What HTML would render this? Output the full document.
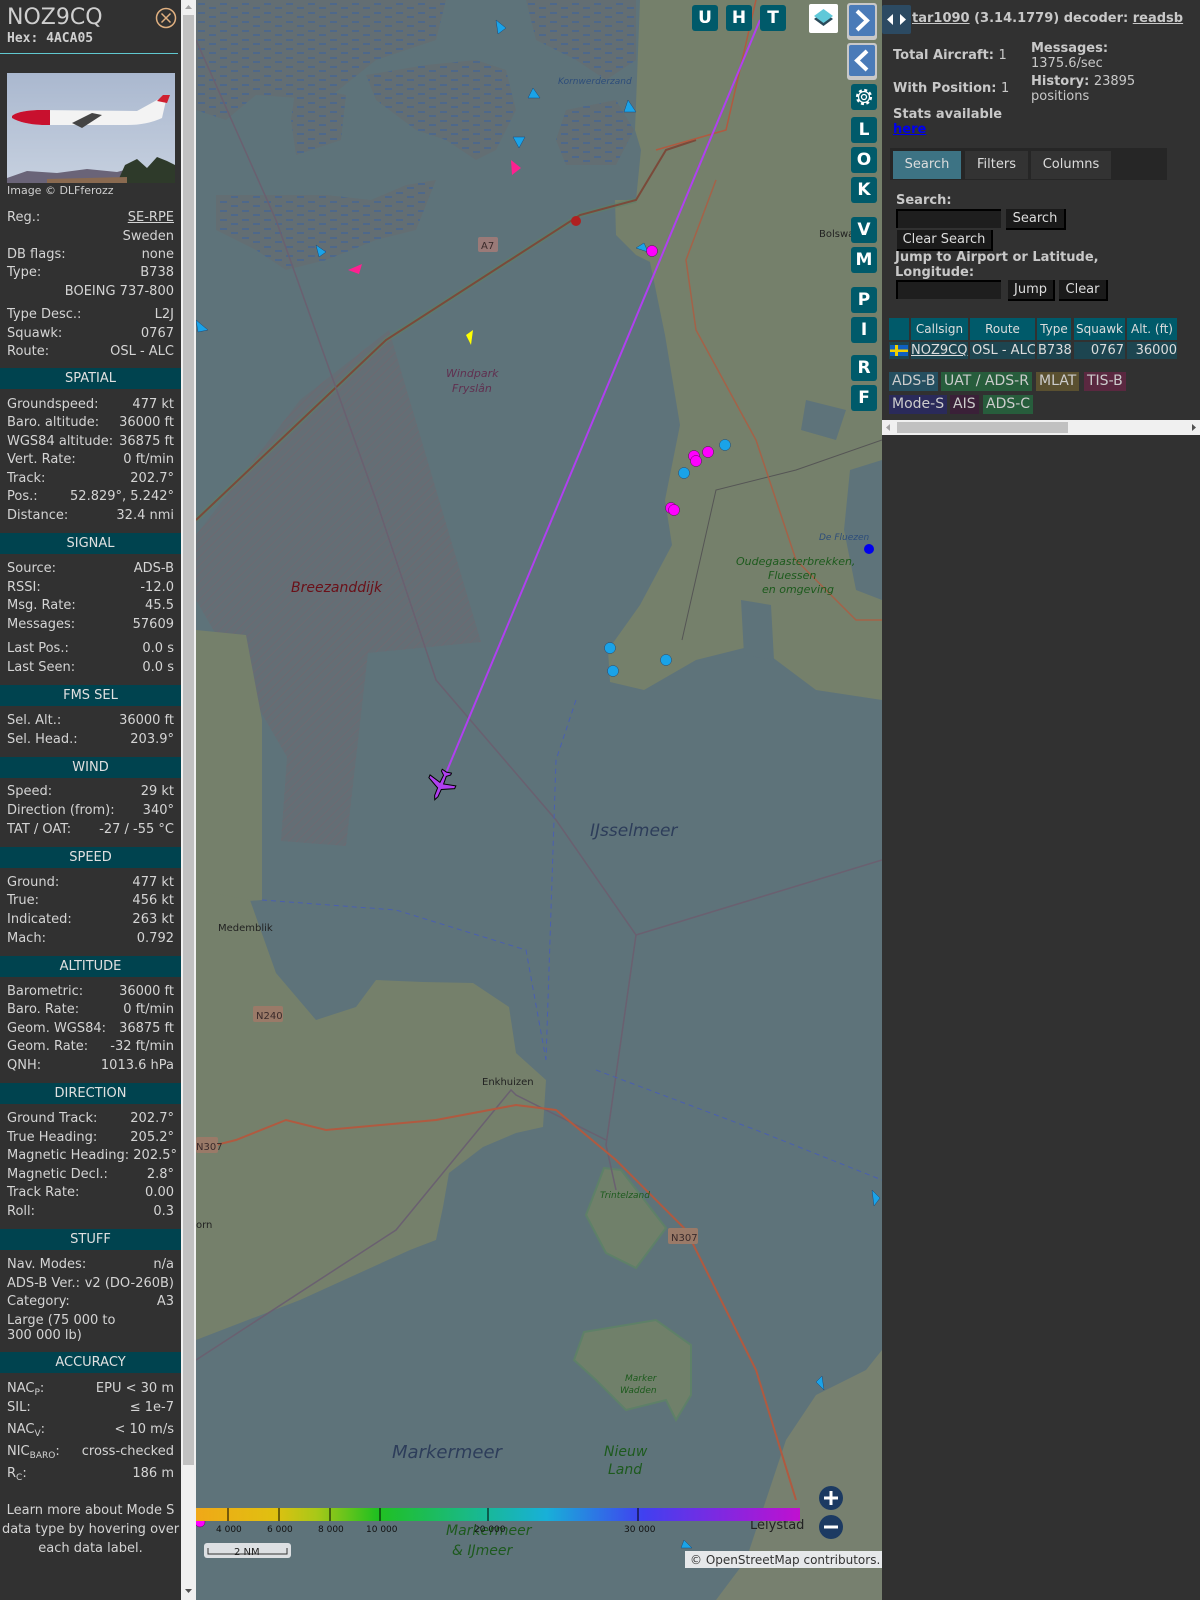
<!DOCTYPE html>
<html><head><meta charset="utf-8">
<style>
*{margin:0;padding:0;box-sizing:border-box}
body{width:1200px;height:1600px;overflow:hidden;background:#313131;font-family:"DejaVu Sans","Liberation Sans",sans-serif;font-size:13px;color:#d4d4d4;position:relative}
#left{position:absolute;left:0;top:0;width:181px;height:1600px;background:#313131}
.r{position:absolute;left:7px;width:167px;height:18px;line-height:18px;display:flex;justify-content:space-between;white-space:nowrap}
.h{position:absolute;left:0;width:181px;height:21px;line-height:21px;background:#00434f;text-align:center;color:#e0e0e0}
sub{font-size:9px;vertical-align:-3px}
#sb{position:absolute;left:181px;top:0;width:15px;height:1600px;background:#f0f0f0}
#map{position:absolute;left:196px;top:0;width:686px;height:1600px;overflow:hidden;background:#5e737a}
.mb{position:absolute;width:26px;height:26px;background:#005a6a;color:#fff;font-weight:bold;font-size:17px;text-align:center;line-height:26px;border-radius:3px}
#right{position:absolute;left:882px;top:0;width:318px;height:1600px;background:#313131;font-weight:bold;color:#c8c8c8}
.btn{position:absolute;background:#1a1a1a;color:#ddd;font-weight:normal;font-size:13px;text-align:center;line-height:19px;border-right:2px solid #000;border-bottom:2px solid #000}
.inp{position:absolute;background:#1e1e1e;border-top:2px solid #000;border-left:2px solid #000}
.th{position:absolute;top:318px;height:22px;line-height:22px;background:#005a6a;color:#ddd;font-weight:normal;font-size:12px;text-align:center;white-space:nowrap}
.td{position:absolute;top:342px;height:17px;line-height:17px;background:#1d4550;color:#ddd;font-weight:normal;font-size:13px;white-space:nowrap;overflow:hidden}
.lg{position:absolute;height:19px;line-height:19px;font-weight:normal;font-size:14px;padding:0 3px;white-space:nowrap}
</style></head><body>

<div id="left">
<div style="position:absolute;left:7px;top:4px;font-size:22px;color:#cfcfcf;line-height:28px">NOZ9CQ</div>
<div style="position:absolute;left:7px;top:31px;font-family:'DejaVu Sans Mono',monospace;font-weight:bold;font-size:13px;color:#cfcfcf">Hex: 4ACA05</div>
<svg style="position:absolute;left:155px;top:7px" width="22" height="22"><circle cx="11" cy="11" r="9.5" fill="none" stroke="#e0b080" stroke-width="1.5"/><path d="M6.5 6.5L15.5 15.5M15.5 6.5L6.5 15.5" stroke="#e0b080" stroke-width="1.5"/></svg>
<div style="position:absolute;left:0;top:53px;width:178px;height:1px;background:#60c8d0"></div>
<svg style="position:absolute;left:7px;top:73px" width="168" height="110">
<defs><linearGradient id="sky" x1="0" y1="0" x2="0" y2="1"><stop offset="0" stop-color="#aab8cf"/><stop offset="1" stop-color="#c6d0df"/></linearGradient></defs>
<rect width="168" height="110" fill="url(#sky)"/>
<path d="M0 105 L20 98 L50 100 L80 96 L110 99 L125 95 L168 100 L168 110 L0 110Z" fill="#6a6478"/>
<path d="M110 110 L118 92 L130 86 L140 95 L150 84 L160 88 L168 92 L168 110Z" fill="#2e3a2a"/>
<path d="M40 106 L120 104 L120 110 L40 110Z" fill="#8a6a50"/>
<path d="M5 43 Q10 38 30 37 L130 38 L150 27 L160 23 L155 45 Q140 52 120 52 L35 52 Q15 51 5 45Z" fill="#f3f3f3"/>
<path d="M5 43 Q10 38 30 37 L43 37 L43 52 L35 52 Q15 51 5 45Z" fill="#c8102e"/>
<path d="M150 28 L156 22 L163 22 L160 30Z" fill="#d02030"/>
<path d="M65 50 L85 40 L95 42 L75 55Z" fill="#444"/>
</svg>
<div style="position:absolute;left:7px;top:184px;font-size:11px;color:#cfcfcf">Image © DLFferozz</div>

<div class="r" style="top:209px"><span>Reg.:</span><span style="text-decoration:underline">SE-RPE</span></div>
<div class="r" style="top:228px"><span></span><span>Sweden</span></div>
<div class="r" style="top:246px"><span>DB flags:</span><span>none</span></div>
<div class="r" style="top:264px"><span>Type:</span><span>B738</span></div>
<div class="r" style="top:283px"><span></span><span>BOEING 737-800</span></div>
<div class="r" style="top:306px"><span>Type Desc.:</span><span>L2J</span></div>
<div class="r" style="top:325px"><span>Squawk:</span><span>0767</span></div>
<div class="r" style="top:343px"><span>Route:</span><span>OSL - ALC</span></div>

<div class="h" style="top:368px">SPATIAL</div>
<div class="r" style="top:396px"><span>Groundspeed:</span><span>477 kt</span></div>
<div class="r" style="top:414px"><span>Baro. altitude:</span><span>36000 ft</span></div>
<div class="r" style="top:433px"><span>WGS84 altitude:</span><span>36875 ft</span></div>
<div class="r" style="top:451px"><span>Vert. Rate:</span><span>0 ft/min</span></div>
<div class="r" style="top:470px"><span>Track:</span><span>202.7°</span></div>
<div class="r" style="top:488px"><span>Pos.:</span><span>52.829°, 5.242°</span></div>
<div class="r" style="top:507px"><span>Distance:</span><span>32.4 nmi</span></div>

<div class="h" style="top:533px">SIGNAL</div>
<div class="r" style="top:560px"><span>Source:</span><span>ADS-B</span></div>
<div class="r" style="top:579px"><span>RSSI:</span><span>-12.0</span></div>
<div class="r" style="top:597px"><span>Msg. Rate:</span><span>45.5</span></div>
<div class="r" style="top:616px"><span>Messages:</span><span>57609</span></div>
<div class="r" style="top:640px"><span>Last Pos.:</span><span>0.0 s</span></div>
<div class="r" style="top:659px"><span>Last Seen:</span><span>0.0 s</span></div>

<div class="h" style="top:685px">FMS SEL</div>
<div class="r" style="top:712px"><span>Sel. Alt.:</span><span>36000 ft</span></div>
<div class="r" style="top:731px"><span>Sel. Head.:</span><span>203.9°</span></div>

<div class="h" style="top:757px">WIND</div>
<div class="r" style="top:783px"><span>Speed:</span><span>29 kt</span></div>
<div class="r" style="top:802px"><span>Direction (from):</span><span>340°</span></div>
<div class="r" style="top:821px"><span>TAT / OAT:</span><span>-27 / -55 °C</span></div>

<div class="h" style="top:847px">SPEED</div>
<div class="r" style="top:874px"><span>Ground:</span><span>477 kt</span></div>
<div class="r" style="top:892px"><span>True:</span><span>456 kt</span></div>
<div class="r" style="top:911px"><span>Indicated:</span><span>263 kt</span></div>
<div class="r" style="top:930px"><span>Mach:</span><span>0.792</span></div>

<div class="h" style="top:956px">ALTITUDE</div>
<div class="r" style="top:983px"><span>Barometric:</span><span>36000 ft</span></div>
<div class="r" style="top:1001px"><span>Baro. Rate:</span><span>0 ft/min</span></div>
<div class="r" style="top:1020px"><span>Geom. WGS84:</span><span>36875 ft</span></div>
<div class="r" style="top:1038px"><span>Geom. Rate:</span><span>-32 ft/min</span></div>
<div class="r" style="top:1057px"><span>QNH:</span><span>1013.6 hPa</span></div>

<div class="h" style="top:1083px">DIRECTION</div>
<div class="r" style="top:1110px"><span>Ground Track:</span><span>202.7°</span></div>
<div class="r" style="top:1129px"><span>True Heading:</span><span>205.2°</span></div>
<div class="r" style="top:1147px"><span>Magnetic Heading:</span><span>&nbsp;202.5°</span></div>
<div class="r" style="top:1166px"><span>Magnetic Decl.:</span><span>2.8°</span></div>
<div class="r" style="top:1184px"><span>Track Rate:</span><span>0.00</span></div>
<div class="r" style="top:1203px"><span>Roll:</span><span>0.3</span></div>

<div class="h" style="top:1229px">STUFF</div>
<div class="r" style="top:1256px"><span>Nav. Modes:</span><span>n/a</span></div>
<div class="r" style="top:1275px"><span>ADS-B Ver.:</span><span>&nbsp;v2 (DO-260B)</span></div>
<div class="r" style="top:1293px"><span>Category:</span><span>A3</span></div>
<div style="position:absolute;left:7px;top:1313px;line-height:15px">Large (75 000 to<br>300 000 lb)</div>

<div class="h" style="top:1352px">ACCURACY</div>
<div class="r" style="top:1380px"><span>NAC<sub>P</sub>:</span><span>EPU &lt; 30 m</span></div>
<div class="r" style="top:1399px"><span>SIL:</span><span>≤ 1e-7</span></div>
<div class="r" style="top:1421px"><span>NAC<sub>V</sub>:</span><span>&lt; 10 m/s</span></div>
<div class="r" style="top:1443px"><span>NIC<sub>BARO</sub>:</span><span>cross-checked</span></div>
<div class="r" style="top:1465px"><span>R<sub>C</sub>:</span><span>186 m</span></div>
<div style="position:absolute;left:0;top:1501px;width:181px;text-align:center;line-height:19px">Learn more about Mode S data type by hovering over each data label.</div>
</div>

<div id="sb">
<div style="position:absolute;left:2px;top:15px;width:11px;height:1450px;background:#c1c1c1"></div>
<svg style="position:absolute;left:3px;top:4px" width="9" height="6"><path d="M1 5L4.5 1L8 5Z" fill="#a3a3a3"/></svg>
<svg style="position:absolute;left:3px;top:1588px" width="9" height="6"><path d="M1 1L4.5 5L8 1Z" fill="#505050"/></svg>
</div>

<div id="map">
<svg width="686" height="1600" style="position:absolute;left:0;top:0">
<defs>
<pattern id="mud" width="22" height="9" patternUnits="userSpaceOnUse"><rect width="22" height="9" fill="#636e73"/><path d="M2 4h7M13 8h7" stroke="#3a62a0" stroke-width="1"/></pattern>
<pattern id="hatch" width="6" height="6" patternUnits="userSpaceOnUse" patternTransform="rotate(45)"><rect width="6" height="6" fill="#646e75"/><path d="M0 0v6" stroke="#74666e" stroke-width="1"/></pattern>
</defs>
<!-- mudflats -->
<path d="M0 0 L250 0 L240 40 L180 60 L130 100 L60 95 L30 120 L0 110Z" fill="url(#mud)"/>
<path d="M170 75 L230 65 L280 60 L310 70 L320 110 L300 150 L280 160 L250 140 L220 130 L180 100Z" fill="url(#mud)"/>
<path d="M100 85 L150 95 L145 140 L100 155 L95 120Z" fill="url(#mud)"/>
<path d="M330 0 L440 0 L440 60 L410 80 L380 60 L340 40Z" fill="url(#mud)"/>
<path d="M370 110 L420 100 L438 130 L420 165 L370 165 L360 140Z" fill="url(#mud)"/>
<path d="M20 195 L130 195 L175 200 L210 185 L240 180 L220 230 L180 240 L130 260 L90 270 L60 250 L20 230Z" fill="url(#mud)"/>
<!-- windpark -->
<path d="M0 535 L104 400 L193 330 L285 642 L172 653 L150 846 L85 841 L91 757 L0 600Z" fill="url(#hatch)"/>
<!-- Friesland land -->
<path d="M444 0 L686 0 L686 700 L620 690 L560 645 L500 660 L448 690 L414 682 L412 650 L444 605 L476 545 L469 500 L484 425 L469 335 L454 262 L440 255 L420 235 L419 200 L440 200 L445 150 L439 130Z" fill="#75806b"/>
<path d="M654 470 L686 460 L686 600 L660 590 L648 530Z" fill="#5e737a"/>
<path d="M545 600 L575 605 L578 660 L548 655Z" fill="#5e737a"/>
<path d="M610 400 L650 410 L640 440 L605 430Z" fill="#5e737a"/>
<!-- left strip NH -->
<path d="M0 630 L50 635 L66 720 L66 900 L0 905Z" fill="#75806b"/>
<!-- West-Friesland -->
<path d="M0 890 L54 900 L80 973 L120 1020 L160 1007 L180 980 L227 982 L277 983 L313 1007 L320 1053 L350 1080 L347 1127 L320 1133 L287 1147 L253 1173 L247 1207 L240 1240 L214 1250 L104 1300 L0 1340Z" fill="#75806b"/>
<!-- islands -->
<path d="M408 1168 L425 1170 L470 1228 L440 1268 L410 1253 L390 1215Z" fill="#70806a" stroke="#5e8068" stroke-width="2"/>
<path d="M388 1332 L460 1320 L495 1345 L495 1395 L480 1420 L470 1400 L430 1410 L400 1380 L378 1360Z" fill="#70806a" stroke="#5e8068" stroke-width="2"/>
<!-- Flevoland -->
<path d="M686 1350 L670 1370 L620 1395 L590 1440 L570 1500 L550 1560 L520 1600 L686 1600Z" fill="#77806f"/>
<!-- roads/borders -->
<path d="M0 520 L190 340 L384 215 L440 200" stroke="#5e8068" stroke-width="5" fill="none" opacity="0.6"/>
<path d="M0 520 L190 340 L384 215 L440 200 L470 150 L500 140" stroke="#7a4a3a" stroke-width="2" fill="none"/>
<path d="M0 40 L80 220 L180 500 L240 680 L360 820 L440 935 L686 860" stroke="#6a6070" stroke-width="1.5" fill="none"/>
<path d="M0 1360 L200 1230 L315 1090 L320 1095 L410 1140" stroke="#6a6070" stroke-width="1.5" fill="none"/>
<path d="M440 935 L410 1145 L420 1190" stroke="#6a6070" stroke-width="1.5" fill="none"/>
<path d="M0 1150 L40 1140 L90 1120 L130 1130 L240 1120 L320 1105 L360 1110 L420 1160 L490 1230 L560 1370 L600 1500" stroke="#b05a40" stroke-width="2" fill="none"/>
<path d="M66 900 L200 910 L330 950 L350 1060" stroke="#4a5fb0" stroke-width="1" stroke-dasharray="5,4" fill="none"/>
<path d="M400 1070 L560 1130 L686 1180" stroke="#4a5fb0" stroke-width="1" stroke-dasharray="5,4" fill="none"/>
<path d="M380 700 L360 760 L350 1060" stroke="#4a5fb0" stroke-width="1" stroke-dasharray="5,4" fill="none"/>
<path d="M686 440 L600 470 L520 490 L486 640" stroke="#555" stroke-width="1" fill="none"/>
<path d="M560 0 L530 130 L460 150" stroke="#b05a40" stroke-width="1.5" fill="none"/>
<path d="M520 180 L490 260 L500 330 L560 440 L600 560 L660 620 L686 620" stroke="#b05a40" stroke-width="1.5" fill="none" opacity="0.8"/>
<!-- track -->
<path d="M564 20 L245 785" stroke="#b040f0" stroke-width="2" fill="none"/>
<!-- labels -->
<g font-family="DejaVu Sans,sans-serif" font-style="italic">
<text x="95" y="592" fill="#6a1018" font-size="14">Breezanddijk</text>
<text x="394" y="836" fill="#2d3d5a" font-size="17">IJsselmeer</text>
<text x="196" y="1458" fill="#2d3d5a" font-size="18">Markermeer</text>
<text x="408" y="1456" fill="#1d5a1d" font-size="14">Nieuw</text>
<text x="412" y="1474" fill="#1d5a1d" font-size="14">Land</text>
<text x="250" y="1535" fill="#1d5a1d" font-size="14">Markermeer</text>
<text x="256" y="1555" fill="#1d5a1d" font-size="14">&amp; IJmeer</text>
<text x="250" y="377" fill="#603050" font-size="11">Windpark</text>
<text x="256" y="392" fill="#603050" font-size="11">Fryslân</text>
<text x="540" y="565" fill="#1d5a1d" font-size="11">Oudegaasterbrekken,</text>
<text x="572" y="579" fill="#1d5a1d" font-size="11">Fluessen</text>
<text x="566" y="593" fill="#1d5a1d" font-size="11">en omgeving</text>
<text x="362" y="84" fill="#2d4d7a" font-size="9">Kornwerderzand</text>
<text x="623" y="540" fill="#2d4d7a" font-size="9">De Fluezen</text>
<text x="404" y="1198" fill="#1d5a1d" font-size="9">Trintelzand</text>
<text x="429" y="1381" fill="#1d5a1d" font-size="9">Marker</text>
<text x="424" y="1393" fill="#1d5a1d" font-size="9">Wadden</text>
</g>
<g font-family="DejaVu Sans,sans-serif" font-size="10" fill="#222">
<text x="22" y="931">Medemblik</text>
<text x="286" y="1085">Enkhuizen</text>
<text x="0" y="1228">orn</text>
<text x="554" y="1529" font-size="13">Lelystad</text>
<text x="623" y="237">Bolswa</text>
</g>
<g font-size="10" fill="#3a2a2a" font-family="DejaVu Sans,sans-serif">
<rect x="282" y="237" width="20" height="15" rx="2" fill="#9a7a78"/><text x="285" y="249">A7</text>
<rect x="57" y="1006" width="30" height="16" rx="2" fill="#9a7a68"/><text x="60" y="1019">N240</text>
<rect x="0" y="1137" width="22" height="16" rx="2" fill="#9a7a68"/><text x="0" y="1150">N307</text>
<rect x="472" y="1228" width="30" height="16" rx="2" fill="#9a7a68"/><text x="475" y="1241">N307</text>
</g>
<!-- markers -->
<g fill="#1aa3e8" stroke="#1a4a7a" stroke-width="0.5">
<path d="M300 20 L310 28 L302 34Z"/><path d="M337 88 L344 98 L332 98Z"/><path d="M432 100 L440 112 L428 112Z"/>
<path d="M317 137 L329 137 L323 148Z"/><path d="M120 245 L130 252 L123 257Z"/><path d="M0 320 L12 330 L2 332Z"/>
<path d="M448 243 L440 248 L452 252Z"/><path d="M620 1382 L628 1390 L626 1376Z"/><path d="M676 1190 L684 1198 L678 1206Z"/><path d="M485 1548 L496 1548 L488 1540Z"/>
</g>
<path d="M315 160 L325 168 L316 175Z" fill="#ff2090"/><path d="M152 270 L166 264 L163 274Z" fill="#ff2090"/>
<path d="M270 335 L277 330 L275 345Z" fill="#ffff00"/>
<circle cx="380" cy="221" r="5" fill="#b02020"/>
<g fill="#ff00ff" stroke="#5a005a" stroke-width="0.5"><circle cx="456" cy="251" r="5.5"/><circle cx="498" cy="456" r="5.5"/><circle cx="500" cy="461" r="5.5"/><circle cx="512" cy="452" r="5.5"/><circle cx="475" cy="508" r="5.5"/><circle cx="478" cy="510" r="5.5"/><circle cx="4" cy="1522" r="5"/></g>
<g fill="#1aa3e8" stroke="#1a4a7a" stroke-width="0.5"><circle cx="529" cy="445" r="5.5"/><circle cx="488" cy="473" r="5.5"/><circle cx="414" cy="648" r="5.5"/><circle cx="470" cy="660" r="5.5"/><circle cx="417" cy="671" r="5.5"/></g>
<circle cx="673" cy="549" r="5" fill="#0000ee"/>
<!-- aircraft -->
<g transform="translate(245,785) rotate(203)">
<path d="M0 -16 L1.8 -12 L2 -4 L14 2 L14 5 L2 2 L1.5 10 L5 13 L5 15 L0 14 L-5 15 L-5 13 L-1.5 10 L-2 2 L-14 5 L-14 2 L-2 -4 L-1.8 -12Z" fill="#b040f0" stroke="#000" stroke-width="1"/>
</g>
<!-- color bar -->
<defs><linearGradient id="cb" x1="0" x2="1"><stop offset="0" stop-color="#f0a818"/><stop offset="0.13" stop-color="#e0c010"/><stop offset="0.2" stop-color="#a8c818"/><stop offset="0.3" stop-color="#20c020"/><stop offset="0.48" stop-color="#18b898"/><stop offset="0.58" stop-color="#18b0d8"/><stop offset="0.74" stop-color="#4040f0"/><stop offset="1" stop-color="#c010d0"/></linearGradient></defs>
<rect x="0" y="1508" width="604" height="13" fill="url(#cb)"/>
<g stroke="#000" stroke-width="1"><path d="M32 1508v13M83 1508v13M134 1508v13M184 1508v13M292 1508v13M442 1508v13"/></g>
<g font-size="9" fill="#111" font-family="DejaVu Sans,sans-serif"><text x="20" y="1532">4 000</text><text x="71" y="1532">6 000</text><text x="122" y="1532">8 000</text><text x="170" y="1532">10 000</text><text x="278" y="1532">20 000</text><text x="428" y="1532">30 000</text></g>
<circle cx="635" cy="1498" r="12" fill="#1c3a62"/><path d="M628 1498h14M635 1491v14" stroke="#fff" stroke-width="3"/>
<circle cx="635" cy="1527" r="12" fill="#1c3a62"/><path d="M628 1527h14" stroke="#fff" stroke-width="3"/>
<rect x="8" y="1543" width="87" height="15" rx="3" fill="#dde0e3"/>
<path d="M12 1548v6h79v-6" stroke="#333" fill="none"/>
<text x="38" y="1555" font-size="10" fill="#222" font-family="DejaVu Sans,sans-serif">2 NM</text>
<rect x="489" y="1551" width="197" height="17" fill="#e6e8ea"/>
<text x="494" y="1564" font-size="12" fill="#333" font-family="DejaVu Sans,sans-serif">© OpenStreetMap contributors.</text>
</svg>
<div class="mb" style="left:496px;top:5px">U</div>
<div class="mb" style="left:530px;top:5px">H</div>
<div class="mb" style="left:564px;top:5px">T</div>
<div style="position:absolute;left:613px;top:4px;width:29px;height:29px;background:#fff;border-radius:2px"><svg width="29" height="29"><path d="M14.5 8L24 15L14.5 22L5 15Z" fill="#2a4a5a"/><path d="M14.5 5L24 12L14.5 19L5 12Z" fill="#60c8d8"/></svg></div>
<div style="position:absolute;left:651px;top:3px;width:30px;height:37px;background:#c8c8c8;border-radius:3px;padding:2px"><div style="width:26px;height:31px;background:#4a7bb8;border-radius:2px"><svg width="26" height="31"><path d="M8 6L18 15.5L8 25" stroke="#fff" stroke-width="4" fill="none"/></svg></div></div>
<div style="position:absolute;left:651px;top:43px;width:30px;height:37px;background:#c8c8c8;border-radius:3px;padding:2px"><div style="width:26px;height:31px;background:#4a7bb8;border-radius:2px"><svg width="26" height="31"><path d="M18 6L8 15.5L18 25" stroke="#fff" stroke-width="4" fill="none"/></svg></div></div>
<div class="mb" style="left:655px;top:84px"><svg width="26" height="26"><circle cx="13" cy="13" r="7" fill="none" stroke="#fff" stroke-width="2.2" stroke-dasharray="3,2.5"/><circle cx="13" cy="13" r="5.5" fill="none" stroke="#fff" stroke-width="1.2"/><circle cx="13" cy="13" r="2.5" fill="none" stroke="#fff" stroke-width="1.3"/></svg></div>
<div class="mb" style="left:655px;top:117px">L</div>
<div class="mb" style="left:655px;top:147px">O</div>
<div class="mb" style="left:655px;top:177px">K</div>
<div class="mb" style="left:655px;top:217px">V</div>
<div class="mb" style="left:655px;top:247px">M</div>
<div class="mb" style="left:655px;top:287px">P</div>
<div class="mb" style="left:655px;top:317px">I</div>
<div class="mb" style="left:655px;top:355px">R</div>
<div class="mb" style="left:655px;top:385px">F</div>
</div>

<div id="right">
<div style="position:absolute;left:30px;top:11px;white-space:nowrap"><span style="text-decoration:underline">tar1090</span> (3.14.1779) decoder: <span style="text-decoration:underline">readsb</span></div>
<div style="position:absolute;left:0;top:5px;width:29px;height:29px;background:#2c4a62;border-radius:2px"><svg width="29" height="29"><path d="M5 14.5L11 9V20Z M24 14.5L18 9V20Z" fill="#fff"/></svg></div>
<div style="position:absolute;left:11px;top:48px">Total Aircraft: <span style="font-weight:normal">1</span></div>
<div style="position:absolute;left:149px;top:41px;line-height:15px">Messages:<br><span style="font-weight:normal">1375.6/sec</span></div>
<div style="position:absolute;left:11px;top:81px">With Position: <span style="font-weight:normal">1</span></div>
<div style="position:absolute;left:149px;top:74px;line-height:15px">History: <span style="font-weight:normal">23895<br>positions</span></div>
<div style="position:absolute;left:11px;top:107px;line-height:15px">Stats available<br><span style="color:#0000ee;text-decoration:underline">here</span></div>
<div style="position:absolute;left:8px;top:148px;width:277px;height:32px;background:#262626"></div>
<div style="position:absolute;left:11px;top:151px;width:68px;height:28px;background:#3d7384;font-weight:normal;color:#ddd;text-align:center;line-height:28px">Search</div>
<div style="position:absolute;left:83px;top:151px;width:63px;height:28px;background:#333;font-weight:normal;color:#ddd;text-align:center;line-height:28px">Filters</div>
<div style="position:absolute;left:149px;top:151px;width:80px;height:28px;background:#333;font-weight:normal;color:#ddd;text-align:center;line-height:28px">Columns</div>
<div style="position:absolute;left:14px;top:193px">Search:</div>
<div class="inp" style="left:14px;top:209px;width:105px;height:19px"></div>
<div class="btn" style="left:124px;top:209px;width:60px;height:21px">Search</div>
<div class="btn" style="left:15px;top:230px;width:96px;height:21px">Clear Search</div>
<div style="position:absolute;left:13px;top:250px;line-height:15px">Jump to Airport or Latitude,<br>Longitude:</div>
<div class="inp" style="left:14px;top:280px;width:105px;height:19px"></div>
<div class="btn" style="left:126px;top:280px;width:47px;height:21px">Jump</div>
<div class="btn" style="left:177px;top:280px;width:49px;height:21px">Clear</div>
<div class="th" style="left:7px;width:20px"></div>
<div class="th" style="left:29px;width:57px">Callsign</div>
<div class="th" style="left:88px;width:65px">Route</div>
<div class="th" style="left:155px;width:34px">Type</div>
<div class="th" style="left:192px;width:51px">Squawk</div>
<div class="th" style="left:245px;width:50px">Alt. (ft)</div>
<div class="td" style="left:7px;width:20px"><svg width="20" height="17"><rect x="1" y="3" width="18" height="11" fill="#1060c0"/><rect x="6" y="3" width="3" height="11" fill="#f0d000"/><rect x="1" y="7.5" width="18" height="2.5" fill="#f0d000"/></svg></div>
<div class="td" style="left:29px;width:57px;text-decoration:underline">NOZ9CQ</div>
<div class="td" style="left:88px;width:65px;padding-left:2px">OSL - ALC</div>
<div class="td" style="left:155px;width:34px;padding-left:1px">B738</div>
<div class="td" style="left:192px;width:51px;text-align:right;padding-right:1px">0767</div>
<div class="td" style="left:245px;width:50px;text-align:right">36000</div>
<div class="lg" style="left:7px;top:372px;background:#254f60;color:#ccc">ADS-B</div>
<div class="lg" style="left:59px;top:372px;background:#275d3c;color:#ccc">UAT / ADS-R</div>
<div class="lg" style="left:154px;top:372px;background:#5a5030;color:#ccc">MLAT</div>
<div class="lg" style="left:202px;top:372px;background:#5a2840;color:#ccc">TIS-B</div>
<div class="lg" style="left:7px;top:395px;background:#2a2a5a;color:#ccc">Mode-S</div>
<div class="lg" style="left:68px;top:395px;background:#3a2038;color:#ccc">AIS</div>
<div class="lg" style="left:101px;top:395px;background:#275d3c;color:#ccc">ADS-C</div>
<div style="position:absolute;left:0;top:420px;width:318px;height:15px;background:#f0f0f0"><div style="position:absolute;left:15px;top:2px;width:171px;height:11px;background:#c1c1c1"></div>
<svg style="position:absolute;left:3px;top:3px" width="6" height="9"><path d="M5 1L1 4.5L5 8Z" fill="#a3a3a3"/></svg><svg style="position:absolute;left:309px;top:3px" width="6" height="9"><path d="M1 1L5 4.5L1 8Z" fill="#505050"/></svg></div>
</div>
</body></html>
